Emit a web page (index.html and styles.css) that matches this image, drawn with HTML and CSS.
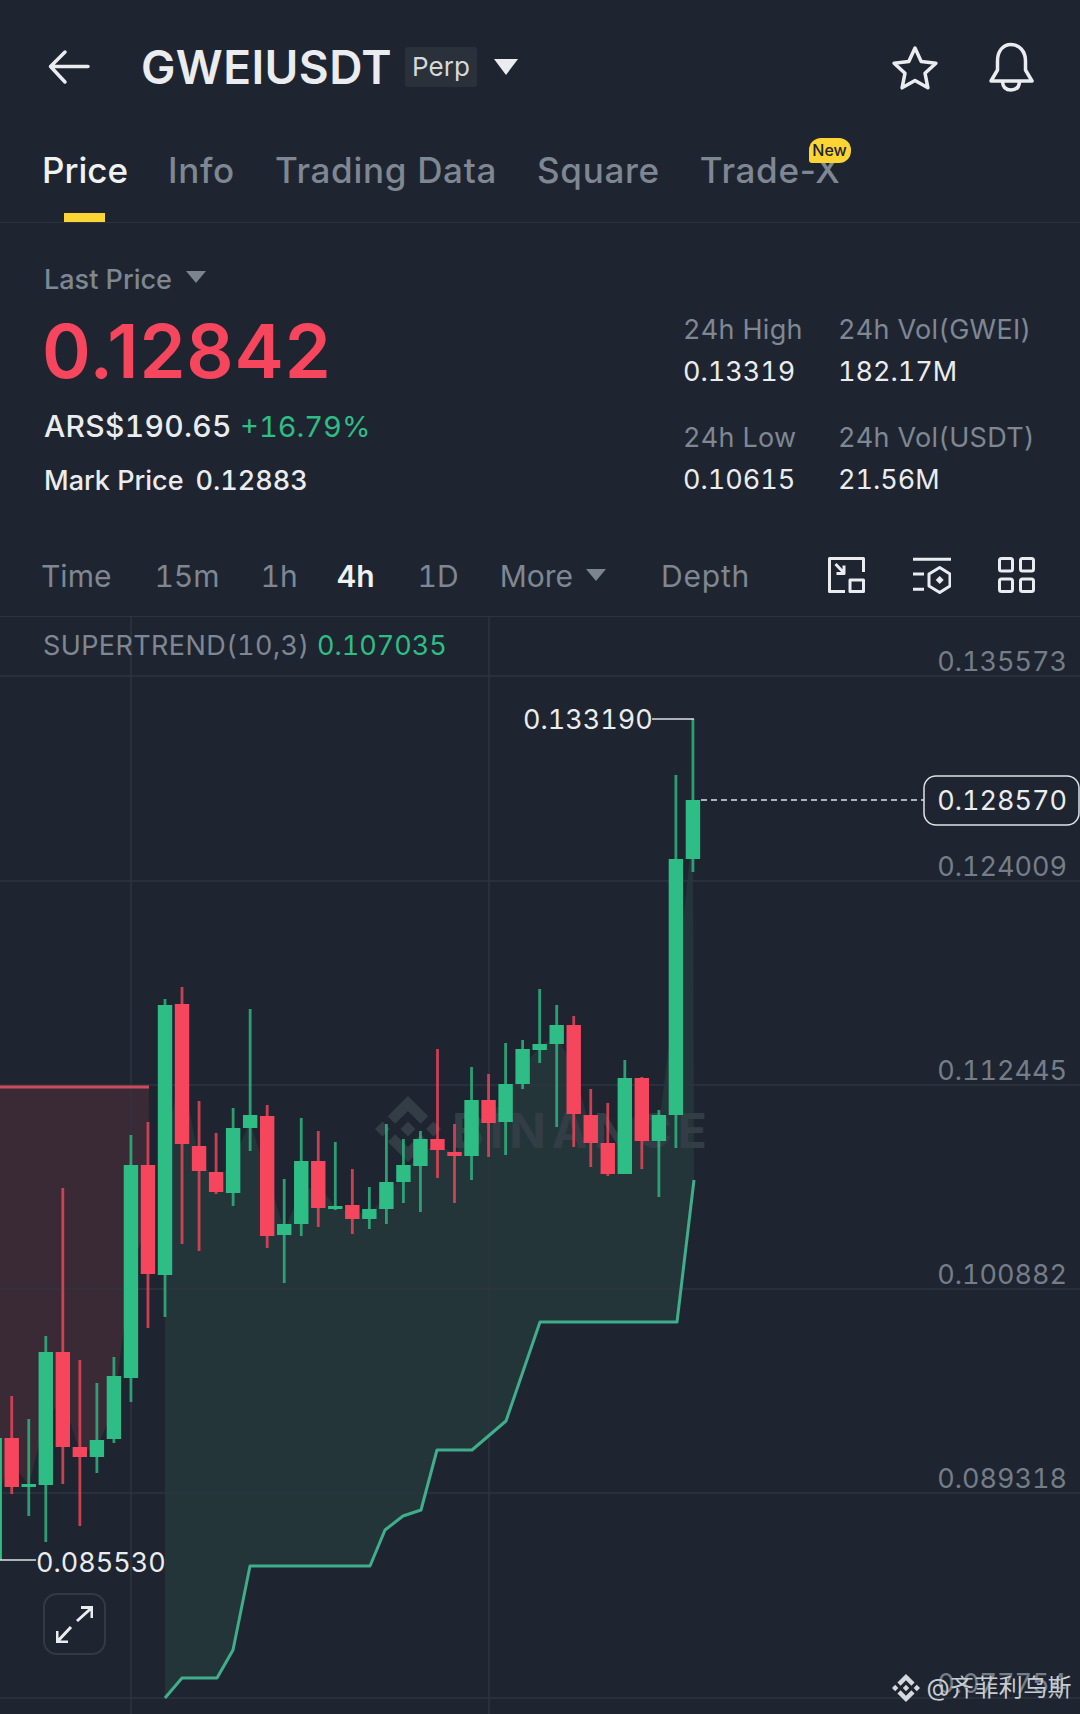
FILE: index.html
```html
<!DOCTYPE html>
<html lang="en">

<head>
	<meta charset="utf-8">
	<title>GWEIUSDT Perp</title>
	<link rel="stylesheet" href="styles.css">
</head>

<body>
	<!-- Top bar -->
	<header class="topbar">
		<svg class="icon-back" viewBox="0 0 44 36">
			<path d="M40 17.5H3M17 3L2.5 17.5L17 33" />
		</svg>
		<h1 class="symbol">GWEIUSDT</h1>
		<span class="perp">Perp</span>
		<span class="caret caret-white"></span>
		<svg class="icon-star" viewBox="0 0 50 48">
			<path d="M25 3L31.2 16.5L45.9 18.2L35 28.2L37.9 42.8L25 35.5L12.1 42.8L15 28.2L4.1 18.2L18.8 16.5Z" />
		</svg>
		<svg class="icon-bell" viewBox="0 0 48 50">
			<path d="M3 39L9.5 28V19C9.5 9 15 2.5 23 2.5C31 2.5 37.5 9 37.5 19V28L44 39Z" />
			<path d="M14.5 40C15 46 19 48 23 48C27 48 31 46 31.5 40" />
		</svg>
	</header>

	<!-- Tabs -->
	<nav class="tabs">
		<a class="tab tab-active">Price</a>
		<a class="tab">Info</a>
		<a class="tab">Trading Data</a>
		<a class="tab">Square</a>
		<a class="tab">Trade-X<span class="badge-new">New</span></a>
	</nav>

	<!-- Price summary -->
	<section class="summary">
		<div class="summary-left">
			<div class="last-price">Last Price<span class="caret caret-gray"></span></div>
			<div class="price">0.12842</div>
			<div class="fiat">ARS$190.65 <span class="change">+16.79%</span></div>
			<div class="mark">Mark Price<span class="mark-value">0.12883</span></div>
		</div>
		<div class="stats">
			<div class="stat">
				<div class="stat-label">24h High</div>
				<div class="stat-value">0.13319</div>
			</div>
			<div class="stat">
				<div class="stat-label">24h Vol(GWEI)</div>
				<div class="stat-value">182.17M</div>
			</div>
			<div class="stat">
				<div class="stat-label">24h Low</div>
				<div class="stat-value">0.10615</div>
			</div>
			<div class="stat">
				<div class="stat-label">24h Vol(USDT)</div>
				<div class="stat-value">21.56M</div>
			</div>
		</div>
	</section>

	<!-- Chart toolbar -->
	<div class="toolbar">
		<span class="period period-time">Time</span>
		<span class="period period-15m">15m</span>
		<span class="period period-1h">1h</span>
		<span class="period period-active">4h</span>
		<span class="period period-1d">1D</span>
		<span class="period period-more">More<span class="caret caret-gray"></span></span>
		<span class="period period-depth">Depth</span>
		<div class="tools">
			<svg class="tool" viewBox="0 0 38 36">
				<path d="M17 34.5H1.5V1.5H35.5V15" />
				<rect x="22" y="23" width="13.5" height="11.5" />
				<path d="M7.5 7L16 16M16 8.5V16.5H8.5" />
			</svg>
			<svg class="tool" viewBox="0 0 38 38">
				<path d="M0 3.3H38M0 18H11M0 33.3H11" />
				<path d="M26.7 11.5L37 18V30L26.7 36.5L16 30V18Z" />
				<path class="tool-fill" d="M26.7 20L30.7 24L26.7 28L22.7 24Z" />
			</svg>
			<svg class="tool" viewBox="0 0 38 36">
				<rect x="1.5" y="1.5" width="13" height="12.5" rx="2" />
				<rect x="22.5" y="1.5" width="13" height="12.5" rx="2" />
				<rect x="1.5" y="22" width="13" height="12.5" rx="2" />
				<rect x="22.5" y="22" width="13" height="12.5" rx="2" />
			</svg>
		</div>
	</div>

	<!-- Chart -->
	<section class="chart">
		<svg class="chart-svg" viewBox="0 617 1080 1097">
			<g id="zones"></g>
			<!-- Grid -->
			<g class="grid">
				<path d="M131 617V1714M489 617V1714" />
				<path d="M0 676H1080M0 881H1080M0 1085H1080M0 1289H1080M0 1493H1080M0 1698H1080" />
			</g>
			<!-- Background watermark -->
			<g class="mark-bg">
				<path transform="translate(375 1096) scale(2.75)" d="M16.624 13.9202l2.7175 2.7154-7.353 7.353-7.353-7.352 2.7175-2.7164 4.6355 4.6595 4.6356-4.6595zm4.6366-4.6366L24 12l-2.7154 2.7164L18.5682 12l2.6924-2.7164zm-9.272.001l2.7163 2.6914-2.7164 2.7174v-.001L9.2721 12l2.7164-2.7154zm-9.2722-.001L5.4088 12l-2.6914 2.6924L0 12l2.7164-2.7164zM11.9885.0115l7.353 7.329-2.7174 2.7154-4.6356-4.6356-4.6355 4.6595-2.7174-2.7154 7.353-7.353z" />
				<text class="mark-text" x="452" y="1148">BINANCE</text>
			</g>
			<path class="red-top" d="M0 1087H149" />
			<path class="trend" d="M165 1698L182 1678H217L233 1650L250 1566H370L385 1530L403 1516L421 1510L437 1450H472L506 1421L540 1322H677L694 1180" />
			<g id="candles"></g>
			<!-- Extreme prices -->
			<path class="extreme" d="M652 719H694" />
			<path class="extreme" d="M0 1560H36" />
			<text class="label" x="523" y="729">0.133190</text>
			<text class="label" x="36" y="1572">0.085530</text>
			<!-- Price axis -->
			<g class="axis">
				<text x="1067" y="671">0.135573</text>
				<text x="1067" y="876">0.124009</text>
				<text x="1067" y="1080">0.112445</text>
				<text x="1067" y="1284">0.100882</text>
				<text x="1067" y="1488">0.089318</text>
				<text x="1067" y="1693">0.077754</text>
			</g>
			<!-- Last price -->
			<path class="last-line" d="M701 800H924" />
			<rect class="last-box" x="924" y="776" width="155" height="49" rx="12" />
			<text class="label label-last" x="1067" y="810">0.128570</text>
		</svg>
		<div class="indicator">SUPERTREND(10,3) <span class="indicator-value">0.107035</span></div>
		<button class="expand">
			<svg viewBox="0 0 37 37">
				<path d="M21 15L36 1.5M25 1.5H36V12M15 21L1 36M1 25V36H12" />
			</svg>
		</button>
		<div class="credit">
			<svg class="credit-logo" viewBox="0 0 24 24">
				<path d="M16.624 13.9202l2.7175 2.7154-7.353 7.353-7.353-7.352 2.7175-2.7164 4.6355 4.6595 4.6356-4.6595zm4.6366-4.6366L24 12l-2.7154 2.7164L18.5682 12l2.6924-2.7164zm-9.272.001l2.7163 2.6914-2.7164 2.7174v-.001L9.2721 12l2.7164-2.7154zm-9.2722-.001L5.4088 12l-2.6914 2.6924L0 12l2.7164-2.7164zM11.9885.0115l7.353 7.329-2.7174 2.7154-4.6356-4.6356-4.6355 4.6595-2.7174-2.7154 7.353-7.353z" />
			</svg>
			<span>@齐菲利乌斯</span>
		</div>
	</section>

	<script src="chart.js"></script>
</body>

</html>
```

FILE: styles.css
```css
/* Page */
body {
	margin: 0;
	width: 1080px;
	height: 1714px;
	overflow: hidden;
	background-color: #1e2530;
	color: #eaecef;
	font-family: Inter, "Noto Sans CJK SC", sans-serif;
	font-variant-numeric: tabular-nums;
}

/* Small triangles next to labels */
.caret {
	display: inline-block;
	width: 0;
	height: 0;
	border-style: solid;
	border-color: transparent;
	border-bottom-width: 0;
}

.caret-white {
	margin-left: 17px;
	border-width: 16px 12px 0;
	border-top-color: #eaecef;
}

.caret-gray {
	margin-left: 14px;
	border-width: 12px 10px 0;
	border-top-color: #7c8490;
	vertical-align: 6px;
}

/* Top bar */
.topbar {
	display: flex;
	align-items: center;
	height: 134px;
	padding-left: 48px;
}

.topbar svg {
	fill: none;
	stroke: #eaecef;
	stroke-width: 3.5;
	stroke-linejoin: round;
	stroke-linecap: round;
}

.icon-back {
	width: 44px;
	height: 36px;
}

.symbol {
	margin: 0 0 0 49px;
	font-size: 46px;
	font-weight: 600;
	letter-spacing: 0.4px;
}

.perp {
	margin-left: 13px;
	padding: 5px 7px;
	background-color: #2a313b;
	border-radius: 3px;
	font-size: 26px;
	line-height: 30px;
	color: #d5d8dc;
}

.icon-star {
	width: 50px;
	height: 48px;
	margin-left: auto;
	margin-top: 3px;
}

.icon-bell {
	width: 48px;
	height: 50px;
	margin-left: 48px;
	margin-right: 44px;
}

/* Tabs */
.tabs {
	display: flex;
	gap: 40px;
	height: 88px;
	padding-left: 42px;
	border-bottom: 1px solid #2e3540;
	font-variant-numeric: normal;
}

.tab {
	position: relative;
	padding-top: 15px;
	font-size: 35px;
	line-height: 42px;
	font-weight: 500;
	letter-spacing: 0.7px;
	color: #7f8793;
}

.tab-active {
	color: #f0f1f3;
	letter-spacing: 0;
}

/* Yellow line under the active tab */
.tab-active::after {
	content: "";
	position: absolute;
	left: 22px;
	bottom: 0;
	width: 41px;
	height: 9px;
	background-color: #fcd535;
}

.badge-new {
	position: absolute;
	right: -10px;
	top: 4px;
	width: 42px;
	height: 25px;
	background-color: #fcd535;
	border-radius: 12px 12px 12px 3px;
	color: #1e2530;
	font-size: 16px;
	line-height: 25px;
	letter-spacing: 0;
	text-align: center;
}

/* Price summary */
.summary {
	display: flex;
	justify-content: space-between;
	height: 307px;
	padding-left: 44px;
}

.last-price {
	margin-top: 41px;
	font-size: 27px;
	line-height: 32px;
	font-weight: 500;
	color: #7f8793;
}

.price {
	margin: 11px 0 0 -2px;
	font-size: 74px;
	line-height: 88px;
	font-weight: 600;
	letter-spacing: 0.8px;
	font-variant-numeric: normal;
	color: #f6465d;
}

.fiat {
	margin-top: 13px;
	font-size: 30px;
	line-height: 36px;
	font-weight: 500;
	letter-spacing: 0.3px;
}

.change {
	color: #2ebd85;
	font-size: 29px;
	font-weight: 400;
	letter-spacing: 0;
}

.mark {
	margin-top: 19px;
	font-size: 27px;
	line-height: 34px;
	font-weight: 500;
}

.mark-value {
	margin-left: 12px;
}

.stats {
	display: grid;
	grid-template-columns: 155px 242px;
	grid-auto-rows: 108px;
	margin-top: 90px;
}

.stat-label {
	font-size: 27px;
	line-height: 34px;
	letter-spacing: 0.3px;
	color: #7f8793;
}

.stat-value {
	margin-top: 8px;
	font-size: 27px;
	line-height: 34px;
}

/* Chart toolbar */
.toolbar {
	display: flex;
	align-items: center;
	height: 80px;
	padding: 6px 0 0 41px;
	border-bottom: 1px solid #2e3540;
}

.period {
	font-size: 30px;
	line-height: 38px;
	color: #7f8793;
}

.period-time {
	margin-right: 43px;
}

.period-15m {
	margin-right: 41px;
}

.period-1h {
	margin-right: 39px;
}

.period-active {
	margin-right: 43px;
	color: #f0f1f3;
	font-weight: 600;
}

.period-1d {
	margin-right: 41px;
}

.period-more {
	margin-right: 55px;
}

.period-more .caret {
	margin-left: 13px;
}

.period-depth {
	letter-spacing: 0.8px;
}

.tools {
	display: flex;
	gap: 47px;
	margin-left: auto;
	margin-right: 44px;
	margin-bottom: 2px;
}

.tool {
	width: 38px;
	height: 38px;
	fill: none;
	stroke: #eaecef;
	stroke-width: 3;
	stroke-linejoin: round;
}

.tool-fill {
	fill: #eaecef;
	stroke: none;
}

/* Chart */
.chart {
	position: relative;
	height: 1097px;
}

.chart-svg {
	display: block;
	width: 1080px;
	height: 1097px;
	font-family: Inter, sans-serif;
}

.grid path {
	fill: none;
	stroke: #2e3540;
	stroke-width: 1.5;
}

.zone-red {
	fill: #3a2a35;
}

.zone-green {
	fill: #243539;
}

.mark-bg {
	fill: #323d46;
}

.mark-text {
	font-size: 48px;
	font-weight: 700;
	letter-spacing: 6px;
}

.red-top {
	fill: none;
	stroke: #cf4a5c;
	stroke-width: 3;
}

.trend {
	fill: none;
	stroke: #3fae8a;
	stroke-width: 3;
	stroke-linejoin: round;
}

.up {
	fill: #2ebd85;
	stroke: #2ebd85;
}

.down {
	fill: #f6465d;
	stroke: #f6465d;
}

.wick {
	stroke-width: 2.8;
	stroke-opacity: 0.8;
}

.body {
	stroke: none;
}

.extreme {
	fill: none;
	stroke: #dfe2e6;
	stroke-width: 1.5;
}

.label {
	fill: #eaecef;
	font-size: 27px;
}

.label-last {
	text-anchor: end;
}

.axis text {
	fill: #757d89;
	font-size: 27px;
	text-anchor: end;
}

.last-line {
	fill: none;
	stroke: #dfe2e6;
	stroke-width: 1.5;
	stroke-dasharray: 6 4;
}

.last-box {
	fill: #1e2530;
	stroke: #dfe2e6;
	stroke-width: 1.5;
}

/* Things that lie over the chart */
.indicator {
	position: absolute;
	left: 43px;
	top: 12px;
	font-size: 27px;
	line-height: 34px;
	letter-spacing: 0.4px;
	color: #7f8793;
}

.indicator-value {
	color: #2ebd85;
	letter-spacing: 0;
}

.expand {
	position: absolute;
	left: 43px;
	top: 976px;
	width: 63px;
	height: 62px;
	padding: 11px;
	background: none;
	border: 2px solid #333a45;
	border-radius: 14px;
}

.expand svg {
	display: block;
	width: 37px;
	height: 37px;
	fill: none;
	stroke: #eaecef;
	stroke-width: 3;
}

.credit {
	position: absolute;
	right: 8px;
	bottom: 11px;
	display: flex;
	align-items: center;
	gap: 6px;
	font-size: 24px;
	line-height: 30px;
	letter-spacing: 0.4px;
	color: #c9cdd2;
}

.credit-logo {
	width: 28px;
	height: 28px;
	fill: #d5d8dc;
}
```

FILE: chart.js
```js
// Candles: [up?, high, low, bodyTop, bodyBottom], from left to right
var candles = [
	[1, 1438, 1560, 1438, 1560],
	[0, 1396, 1494, 1438, 1487],
	[1, 1419, 1516, 1484, 1487],
	[1, 1336, 1542, 1352, 1485],
	[0, 1188, 1484, 1352, 1447],
	[0, 1360, 1526, 1447, 1457],
	[1, 1383, 1473, 1440, 1457],
	[1, 1357, 1443, 1376, 1439],
	[1, 1135, 1402, 1165, 1378],
	[0, 1122, 1328, 1165, 1274],
	[1, 999, 1317, 1005, 1275],
	[0, 987, 1244, 1004, 1144],
	[0, 1101, 1251, 1146, 1171],
	[0, 1133, 1194, 1172, 1192],
	[1, 1108, 1206, 1128, 1193],
	[1, 1009, 1151, 1115, 1128],
	[0, 1105, 1248, 1116, 1236],
	[1, 1179, 1283, 1224, 1235],
	[1, 1118, 1236, 1161, 1224],
	[0, 1131, 1227, 1161, 1208],
	[1, 1142, 1210, 1206, 1209],
	[0, 1169, 1234, 1205, 1219],
	[1, 1187, 1229, 1209, 1219],
	[1, 1124, 1224, 1182, 1209],
	[1, 1139, 1203, 1165, 1182],
	[1, 1131, 1212, 1139, 1166],
	[0, 1049, 1178, 1139, 1150],
	[0, 1124, 1203, 1152, 1156],
	[1, 1067, 1180, 1100, 1156],
	[0, 1074, 1157, 1100, 1123],
	[1, 1043, 1155, 1084, 1122],
	[1, 1040, 1089, 1049, 1084],
	[1, 989, 1063, 1044, 1050],
	[1, 1005, 1127, 1025, 1044],
	[0, 1016, 1147, 1025, 1114],
	[0, 1089, 1167, 1115, 1143],
	[0, 1103, 1176, 1143, 1174],
	[1, 1060, 1174, 1078, 1174],
	[0, 1077, 1169, 1078, 1141],
	[1, 1110, 1197, 1115, 1141],
	[1, 775, 1148, 859, 1115],
	[1, 719, 872, 800, 859]
];

var SVG_NS = "http://www.w3.org/2000/svg";
var START_X = -5.3;
var STEP = 17.03;
var BODY_WIDTH = 14.4;

function addShape(parent, name, attrs) {
	var el = document.createElementNS(SVG_NS, name);
	for (var key in attrs) {
		el.setAttribute(key, attrs[key]);
	}
	parent.appendChild(el);
}

// Draw the candles
var candleGroup = document.getElementById("candles");
candles.forEach(function (c, i) {
	var x = START_X + STEP * i;
	var cls = c[0] ? "up" : "down";
	addShape(candleGroup, "line", { "class": cls + " wick", x1: x, x2: x, y1: c[1], y2: c[2] });
	addShape(candleGroup, "rect", {
		"class": cls + " body",
		x: x - BODY_WIDTH / 2,
		y: c[3],
		width: BODY_WIDTH,
		height: c[4] - c[3]
	});
});

// Supertrend zones run from the line to the middle of each candle
function middle(i) {
	return (candles[i][3] + candles[i][4]) / 2;
}

var zones = document.getElementById("zones");
var redPoints = ["0,1087", "149,1087"];
for (var i = 9; i >= 0; i--) {
	redPoints.push((START_X + STEP * i) + "," + middle(i));
}
redPoints.push("0,1480");
addShape(zones, "polygon", { "class": "zone-red", points: redPoints.join(" ") });

var greenPoints = ["165,1698", "182,1678", "217,1678", "233,1650", "250,1566", "370,1566", "385,1530",
	"403,1516", "421,1510", "437,1450", "472,1450", "506,1421", "540,1322", "677,1322", "694,1180"];
for (var j = 41; j >= 10; j--) {
	greenPoints.push((START_X + STEP * j) + "," + middle(j));
}
addShape(zones, "polygon", { "class": "zone-green", points: greenPoints.join(" ") });
```
